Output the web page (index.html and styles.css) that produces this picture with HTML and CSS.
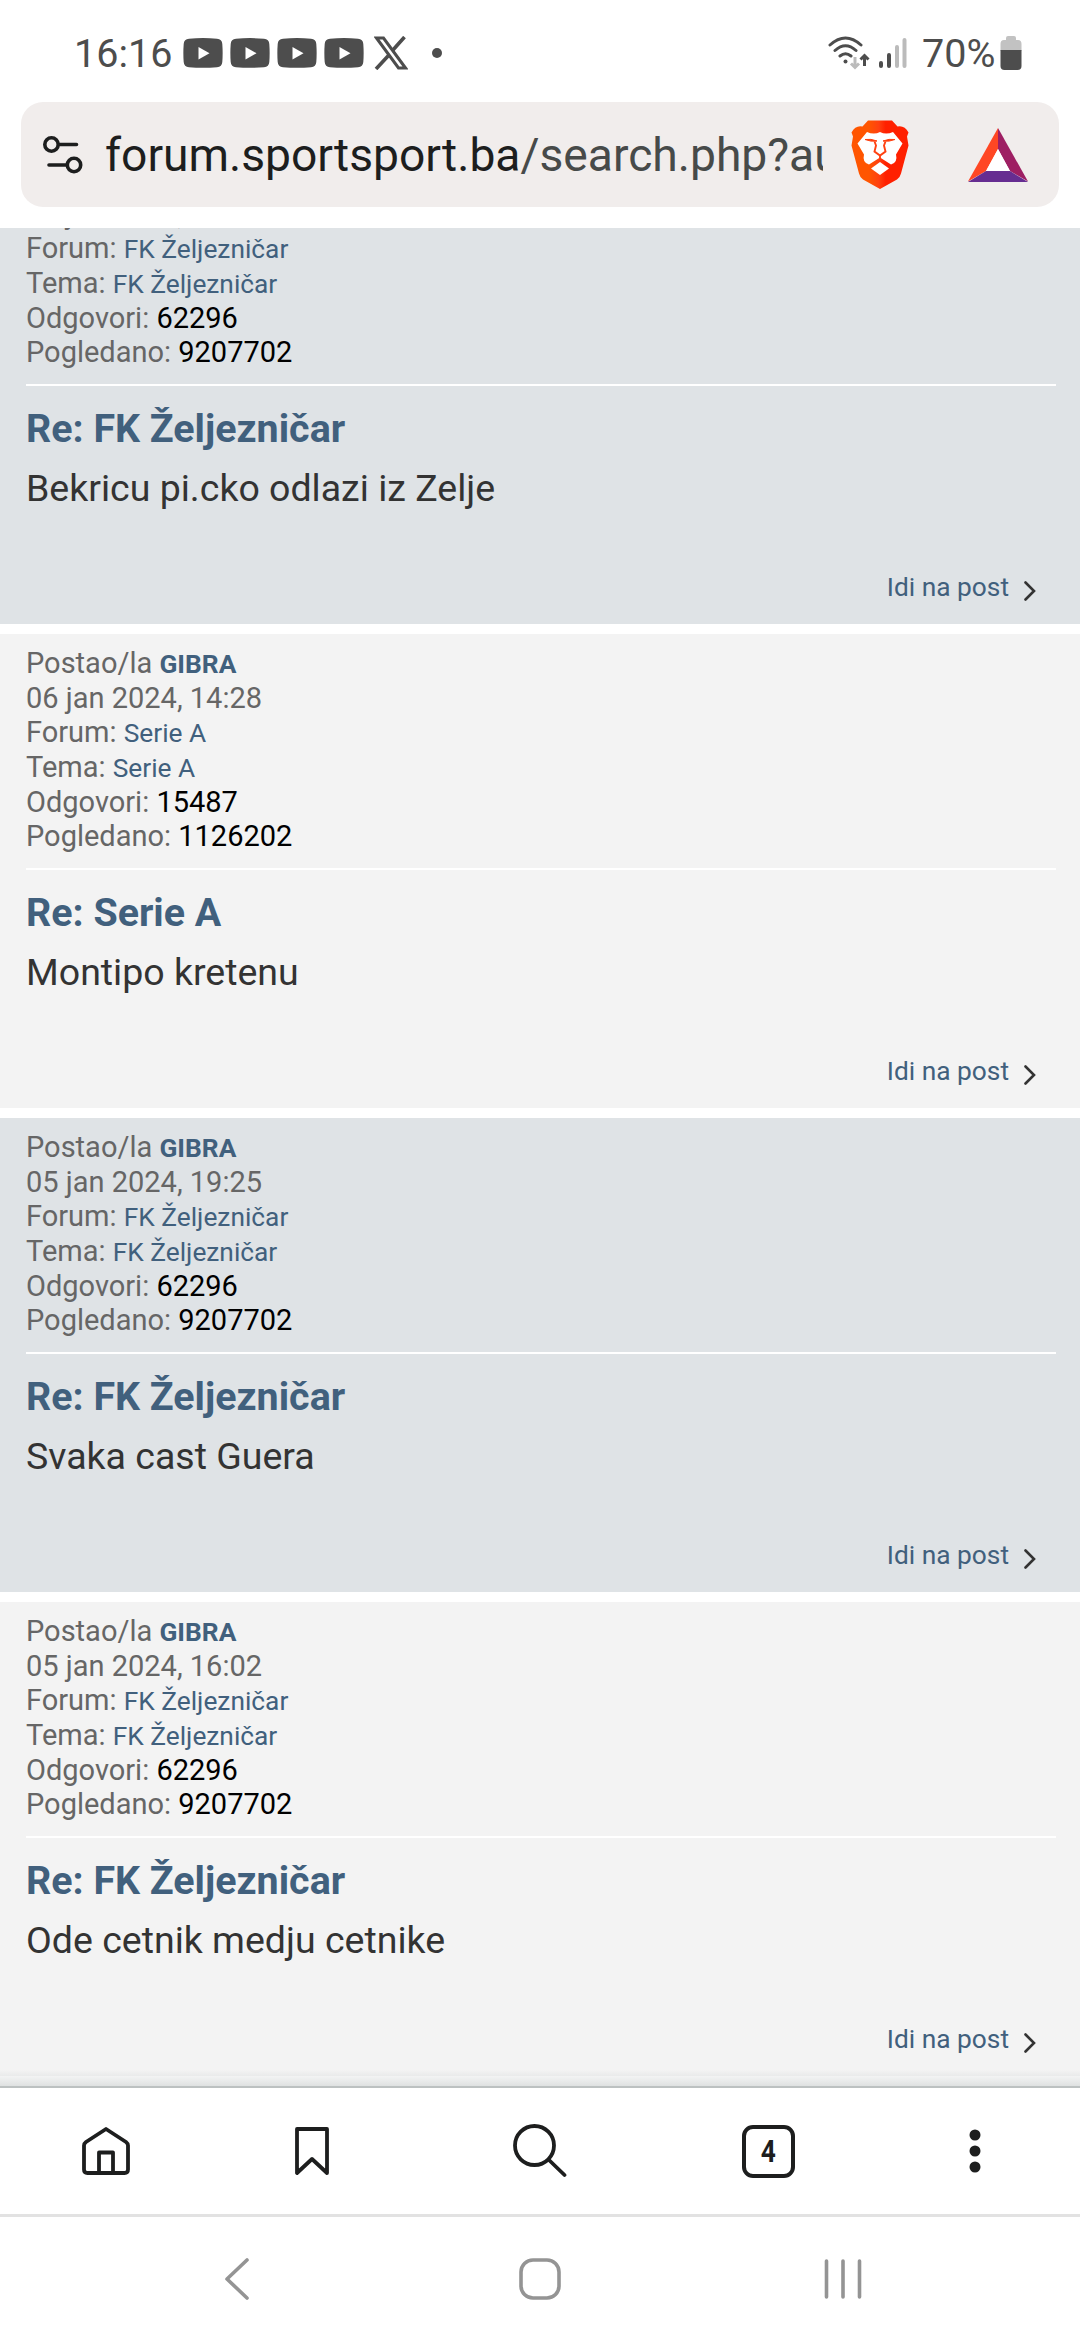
FILE: index.html
```
<!DOCTYPE html>
<html lang="bs">
<head>
    <meta charset="UTF-8">
    <meta name="viewport" content="width=device-width, initial-scale=1.0">
    <title>forum.sportsport.ba</title>
    <link rel="stylesheet" href="styles.css">
</head>
<body>
    <header id="status">
        <span class="sat">16:16</span>
        <svg class="yt" viewBox="0 0 40 30"><path d="M6 .8Q20-.6 34 .8Q39 1.3 39.3 6Q40 15 39.3 24Q39 28.700 34 29.200Q20 30.400 6 29.200Q1 28.700.7 24Q0 15 .7 6Q1 1.300 6 .8z" fill="#4d4d4d"/><path d="M15.500 9v12.500l11-6.250z" fill="#fff"/></svg>
        <svg class="yt" viewBox="0 0 40 30"><path d="M6 .8Q20-.6 34 .8Q39 1.3 39.3 6Q40 15 39.3 24Q39 28.700 34 29.200Q20 30.400 6 29.200Q1 28.700.7 24Q0 15 .7 6Q1 1.300 6 .8z" fill="#4d4d4d"/><path d="M15.500 9v12.500l11-6.250z" fill="#fff"/></svg>
        <svg class="yt" viewBox="0 0 40 30"><path d="M6 .8Q20-.6 34 .8Q39 1.3 39.3 6Q40 15 39.3 24Q39 28.700 34 29.200Q20 30.400 6 29.200Q1 28.700.7 24Q0 15 .7 6Q1 1.300 6 .8z" fill="#4d4d4d"/><path d="M15.500 9v12.500l11-6.250z" fill="#fff"/></svg>
        <svg class="yt" viewBox="0 0 40 30"><path d="M6 .8Q20-.6 34 .8Q39 1.3 39.3 6Q40 15 39.3 24Q39 28.700 34 29.200Q20 30.400 6 29.200Q1 28.700.7 24Q0 15 .7 6Q1 1.300 6 .8z" fill="#4d4d4d"/><path d="M15.500 9v12.500l11-6.250z" fill="#fff"/></svg>
        <svg class="iks" viewBox="0 0 34 34"><path d="M2.500 2h7L31.500 32h-7z" fill="none" stroke="#4d4d4d" stroke-width="3"/><path d="M30.500 1L18.500 14.500M14.500 19.500L2 33" stroke="#4d4d4d" stroke-width="3.600"/></svg>
        <i class="tacka"></i>

        <svg class="wifi" viewBox="0 0 42 34" fill="none" stroke="#4d4d4d" stroke-width="3" stroke-linecap="round"><path d="M2 9Q17.500-5 33 9M7 14.500Q17.500 5 28 14.500M12 20Q17.500 15.500 23 20"/><circle cx="17.500" cy="25.500" r="2" fill="#4d4d4d" stroke="none"/><path d="M36.500 30v-9.500M32.500 23.500l4-4 4 4" stroke-linecap="butt"/><path d="M27 21v10M23 27.500l4 4 4-4" stroke="#bbb" stroke-linecap="butt"/></svg>
        <svg class="signal" viewBox="0 0 29 32" stroke="#4d4d4d" stroke-width="4" stroke-linecap="round"><path d="M3 26v3M11 18v11"/><path d="M19 10v19M26.500 3v26" stroke="#bbb"/></svg>
        <span class="posto">70%</span>
        <svg class="baterija" viewBox="0 0 22 34"><path d="M6 2q0-2 2-2h6q2 0 2 2v2h2q3.500 0 3.500 4v7H.5V8q0-4 3.500-4h2z" fill="#c2c2c2"/><path d="M.5 14h21v16q0 4-4 4h-13q-4 0-4-4z" fill="#4d4d4d"/></svg>
    </header>

    <div id="adresa">
        <svg class="opcije" viewBox="0 0 40 38" fill="none" stroke="#1d1e1e" stroke-width="3.600" stroke-linecap="round"><circle cx="8.500" cy="8.500" r="6.700"/><path d="M16 8.500h17.500M6 29h17"/><circle cx="31" cy="29" r="6.700"/></svg>
        <div class="url">forum.sportsport.ba<span>/search.php?au</span></div>
        <svg class="lav" viewBox="11 5.500 58 69">
            <defs><linearGradient id="brave"><stop offset="0.300" stop-color="#ff5500"/><stop offset="0.480" stop-color="#ff4010"/><stop offset="0.600" stop-color="#ff2000"/></linearGradient></defs>
            <path d="M28 6h24l5.500 6q7-1.500 11 6l-1.500 4 1.500 9-7.500 28q-1 4-4 6L40 74.500 23 65q-3-2-4-6l-7.500-28L13 22l-1.500-4q4-7.500 11-6z" fill="url(#brave)"/>
            <path d="M27 17.500Q34 20.500 40 17.500Q46 20.500 53 17.500L62.500 29L56 40Q58 48 51 50L40 43L29 50Q22 48 24 40L17.500 29z" fill="#fff"/>
            <path d="M25 25Q31 24 37 26.500Q31 27.500 25 25zM55 25Q49 24 43 26.500Q49 27.500 55 25z" fill="#ff4010" stroke="#ff4010"/>
            <path d="M34.500 27L36 31L34.500 37L40 41L45.500 37L44 31L45.500 27M40 41v4" fill="none" stroke="#ff4010" stroke-width="1.900"/>
            <path d="M40 47.500l9 6.500-9 6.500-9-6.500z" fill="#fff"/>
        </svg>
        <svg class="bat" viewBox="0 0 60 54"><path d="M30 0v21L18 43 0 53.500z" fill="#ff4724"/><path d="M30 0v21l12 22 18 10.500z" fill="#9e1f63"/><path d="M0 54l18-11h24l18 11z" fill="#662d91"/><path d="M30 21l12 22H18z" fill="#fff"/></svg>
    </div>

    <main id="rezultati">
        <div class="post bg2 prvi">
            <dl>
                <dt>Postao/la <a class="autor">GIBRA</a></dt>
                <dd>06 jan 2024, 14:28</dd>
                <dd>Forum: <a>FK Željezničar</a></dd>
                <dd>Tema: <a>FK Željezničar</a></dd>
                <dd>Odgovori: <b>62296</b></dd>
                <dd>Pogledano: <b>9207702</b></dd>
            </dl>
            <h3>Re: FK Željezničar</h3>
            <p>Bekricu pi.cko odlazi iz Zelje</p>
            <div class="idi"><a>Idi na post</a><svg viewBox="0 0 12 20"><path d="M1.500 1.500l8.500 8.500-8.500 8.500"/></svg></div>
        </div>

        <div class="post bg1">
            <dl>
                <dt>Postao/la <a class="autor">GIBRA</a></dt>
                <dd>06 jan 2024, 14:28</dd>
                <dd>Forum: <a>Serie A</a></dd>
                <dd>Tema: <a>Serie A</a></dd>
                <dd>Odgovori: <b>15487</b></dd>
                <dd>Pogledano: <b>1126202</b></dd>
            </dl>
            <h3>Re: Serie A</h3>
            <p>Montipo kretenu</p>
            <div class="idi"><a>Idi na post</a><svg viewBox="0 0 12 20"><path d="M1.500 1.500l8.500 8.500-8.500 8.500"/></svg></div>
        </div>

        <div class="post bg2">
            <dl>
                <dt>Postao/la <a class="autor">GIBRA</a></dt>
                <dd>05 jan 2024, 19:25</dd>
                <dd>Forum: <a>FK Željezničar</a></dd>
                <dd>Tema: <a>FK Željezničar</a></dd>
                <dd>Odgovori: <b>62296</b></dd>
                <dd>Pogledano: <b>9207702</b></dd>
            </dl>
            <h3>Re: FK Željezničar</h3>
            <p>Svaka cast Guera</p>
            <div class="idi"><a>Idi na post</a><svg viewBox="0 0 12 20"><path d="M1.500 1.500l8.500 8.500-8.500 8.500"/></svg></div>
        </div>

        <div class="post bg1">
            <dl>
                <dt>Postao/la <a class="autor">GIBRA</a></dt>
                <dd>05 jan 2024, 16:02</dd>
                <dd>Forum: <a>FK Željezničar</a></dd>
                <dd>Tema: <a>FK Željezničar</a></dd>
                <dd>Odgovori: <b>62296</b></dd>
                <dd>Pogledano: <b>9207702</b></dd>
            </dl>
            <h3>Re: FK Željezničar</h3>
            <p>Ode cetnik medju cetnike</p>
            <div class="idi"><a>Idi na post</a><svg viewBox="0 0 12 20"><path d="M1.500 1.500l8.500 8.500-8.500 8.500"/></svg></div>
        </div>
        <div class="sjena"></div>
    </main>

    <nav id="alatna">
        <svg class="kuca" viewBox="0 0 48 48"><path d="M24 2L4 15Q2 16.500 2 18.500V42.500q0 3.500 3.500 3.500h37Q46 46 46 42.500V18.500q0-2-2-3.500zM17 45.500V25.500h14v20"/></svg>
        <svg class="oznaka" viewBox="0 0 34 48"><path d="M2 2h30v44L17 32 2 46z"/></svg>
        <svg class="lupa" viewBox="0 0 54 54"><circle cx="21.500" cy="21.500" r="19.500"/><path d="M36 36l15.500 15"/></svg>
        <div class="tabovi"><span>4</span></div>
        <svg class="meni" viewBox="0 0 12 44"><circle cx="6" cy="6" r="5.500"/><circle cx="6" cy="22" r="5.500"/><circle cx="6" cy="38" r="5.500"/></svg>
    </nav>

    <footer id="sistem">
        <svg class="nazad" viewBox="0 0 24 42"><path d="M22 2L2 21l20 19"/></svg>
        <svg class="pocetna" viewBox="0 0 42 42"><rect x="2" y="2" width="38" height="38" rx="12"/></svg>
        <svg class="nedavno" viewBox="0 0 38 42"><path d="M2.500 3v36M19 3v36M35.500 3v36"/></svg>
    </footer>
</body>
</html>
```
FILE: styles.css
```
* {
    box-sizing: border-box;
}

body {
    margin: 0;
    width: 1080px;
    height: 2340px;
    overflow: hidden;
    display: flex;
    flex-direction: column;
    background-color: #fff;
    font-family: Roboto, sans-serif;
}

svg {
    display: block;
    flex: none;
}

/* statusna traka */
#status {
    height: 102px;
    padding: 4px 58px 0 74px;
    display: flex;
    align-items: center;
    color: #4d4d4d;
    font-size: 39.500px;
}
.sat {
    width: 109px;
}
.yt {
    width: 40px;
    height: 30px;
    margin-right: 7px;
}
.iks {
    width: 34px;
    height: 34px;
    margin: 0 24px 0 3px;
}
.tacka {
    width: 10px;
    height: 10px;
    border-radius: 50%;
    background-color: #4d4d4d;
}
.wifi {
    width: 42px;
    height: 34px;
    margin-left: auto;
}
.signal {
    width: 29px;
    height: 32px;
    margin: 0 15px 0 8px;
}
.posto {
    width: 78px;
}
.baterija {
    width: 22px;
    height: 34px;
}

/* adresna traka */
#adresa {
    height: 105px;
    margin: 0 21px 21px;
    padding: 0 31px 0 22px;
    display: flex;
    align-items: center;
    background-color: #f1edec;
    border-radius: 22px;
}
.opcije {
    width: 40px;
    height: 38px;
}
.url {
    width: 718px;
    margin-left: 22px;
    padding-top: 1px;
    overflow: hidden;
    white-space: nowrap;
    font-size: 46.200px;
    color: #1d1e1e;
}
.url span {
    color: #474a49;
}
.lav {
    width: 58px;
    height: 69px;
    margin: 0 59px 0 28px;
}
.bat {
    width: 60px;
    height: 54px;
}

/* rezultati pretrage */
#rezultati {
    position: relative;
    height: 1860px;
    overflow: hidden;
}
.post {
    height: 473.500px;
    margin-bottom: 10.500px;
    padding: 12px 24px 0 26px;
}
.prvi {
    margin-top: -78px;
}
.bg1 {
    background-color: #f3f3f3;
}
.bg2 {
    background-color: #dfe3e6;
}
dl {
    margin: 0;
    height: 224px;
    border-bottom: 2px solid #fff;
    font-size: 29px;
    line-height: 34.660px;
    color: #666;
}
dt, dd {
    margin: 0;
    height: 34.660px;
}
dl a {
    font-size: 26.300px;
    line-height: 1;
    color: #41607d;
}
dl .autor {
    font-weight: 700;
}
dl b {
    font-weight: 400;
    color: #000;
}
h3 {
    margin: 20px 0 0;
    font-size: 39.400px;
    line-height: 46px;
    font-weight: 700;
    color: #41607d;
}
.post p {
    margin: 12px 0 0;
    height: 107px;
    font-size: 37.500px;
    line-height: 48px;
    color: #333;
}
.idi {
    display: flex;
    justify-content: flex-end;
    align-items: center;
    padding-right: 20px;
    font-size: 26.300px;
    line-height: 32px;
    color: #41607d;
}
.idi svg {
    width: 12px;
    height: 20px;
    margin: 8px 0 0 15px;
    fill: none;
    stroke: #333;
    stroke-width: 2.600;
    stroke-linecap: round;
}
.sjena {
    position: absolute;
    left: 0;
    right: 0;
    bottom: 0;
    height: 18px;
    border-bottom: 2px solid #bcc1c1;
    background: linear-gradient(rgba(190, 195, 195, 0), rgba(190, 195, 195, .5));
}

/* donja traka pregledaca */
#alatna {
    height: 129px;
    border-bottom: 3px solid #e2e2e2;
    display: flex;
    align-items: center;
    padding: 0 99px 0 82px;
    justify-content: space-between;
}
#alatna svg {
    fill: none;
    stroke: #1d1e1e;
    stroke-width: 3.800;
    stroke-linejoin: round;
    stroke-linecap: round;
}
.kuca {
    width: 48px;
    height: 48px;
}
.oznaka {
    width: 34px;
    height: 48px;
    margin: 0 10px 0 -10px;
}
.lupa {
    width: 54px;
    height: 54px;
}
.tabovi {
    width: 53px;
    height: 53px;
    border: 4px solid #1d1e1e;
    border-radius: 11px;
    text-align: center;
    font-size: 32px;
    line-height: 45px;
    font-weight: 700;
    color: #1d1e1e;
}
.tabovi span {
    display: inline-block;
    transform: scaleX(.82);
}
.meni {
    width: 12px;
    height: 44px;
}
#alatna .meni {
    fill: #1d1e1e;
    stroke: none;
}

/* sistemska navigacija */
#sistem {
    height: 123px;
    padding: 0 218px 0 225px;
    display: flex;
    align-items: center;
    justify-content: space-between;
}
#sistem svg {
    fill: none;
    stroke: #949494;
    stroke-width: 3.600;
    stroke-linecap: round;
    stroke-linejoin: round;
}
.nazad {
    width: 24px;
    height: 42px;
}
.pocetna {
    width: 42px;
    height: 42px;
    margin: 0 -3px 0 3px;
}
.nedavno {
    width: 38px;
    height: 42px;
}
```
